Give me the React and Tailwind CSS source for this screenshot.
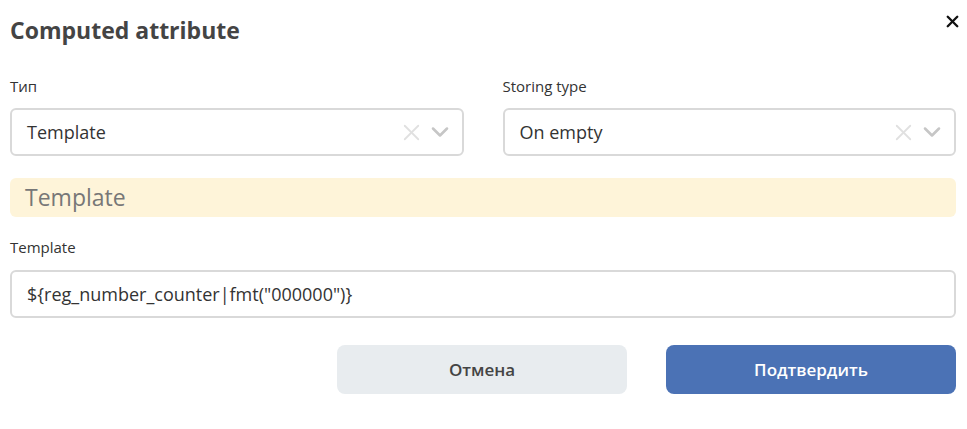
import { X, ChevronDown } from 'lucide-react';

function SelectBox({ value }) {
  return (
    <div className="flex h-12 items-center rounded-md border-2 border-[#d9d9d9] bg-white pl-[15px] pr-[8px]">
      <span className="flex-1 text-[18px] text-[#333]">{value}</span>
      <X size={27} strokeWidth={1.6} className="text-[#e0e0e0]" />
      <ChevronDown size={28} strokeWidth={2.2} className="ml-[1px] text-[#c6c6c6]" />
    </div>
  );
}

export default function App() {
  return (
    <div className="min-h-screen bg-white px-[10px] pr-[11px] font-['Open_Sans',sans-serif] text-[#333]">
      {/* Header */}
      <div className="flex items-start justify-between pt-[12px]">
        <h1 className="text-[23px] font-bold leading-[36px] text-[#444]">Computed attribute</h1>
        <button className="mr-[-6px] text-[#111]">
          <X size={19} strokeWidth={3} />
        </button>
      </div>

      {/* Selects */}
      <div className="mt-[28px] grid grid-cols-2 gap-[39px]">
        <div>
          <label className="block text-[15px] leading-[20px] text-[#333]">Тип</label>
          <div className="mt-[12px]">
            <SelectBox value="Template" />
          </div>
        </div>
        <div>
          <label className="block text-[15px] leading-[20px] text-[#333]">Storing type</label>
          <div className="mt-[12px]">
            <SelectBox value="On empty" />
          </div>
        </div>
      </div>

      {/* Section banner */}
      <div className="mt-[22px] flex h-[39px] items-center rounded-md bg-[#fef4d9] px-[15px]">
        <span className="text-[23px] text-[#777]">Template</span>
      </div>

      {/* Template input */}
      <label className="mt-[20px] block text-[15px] leading-[20px] text-[#333]">Template</label>
      <div className="mt-[13px] flex h-12 items-center rounded-md border-2 border-[#d9d9d9] pl-[15px]">
        <span className="text-[18px] text-[#333]">{'${reg_number_counter|fmt("000000")}'}</span>
      </div>

      {/* Actions */}
      <div className="mt-[27px] flex justify-end gap-[39px]">
        <button className="h-[49px] w-[290px] rounded-lg bg-[#e8ecef] text-[17px] font-semibold text-[#444]">
          Отмена
        </button>
        <button className="h-[49px] w-[290px] rounded-lg bg-[#4b72b5] text-[17px] font-semibold text-white">
          Подтвердить
        </button>
      </div>
    </div>
  );
}
